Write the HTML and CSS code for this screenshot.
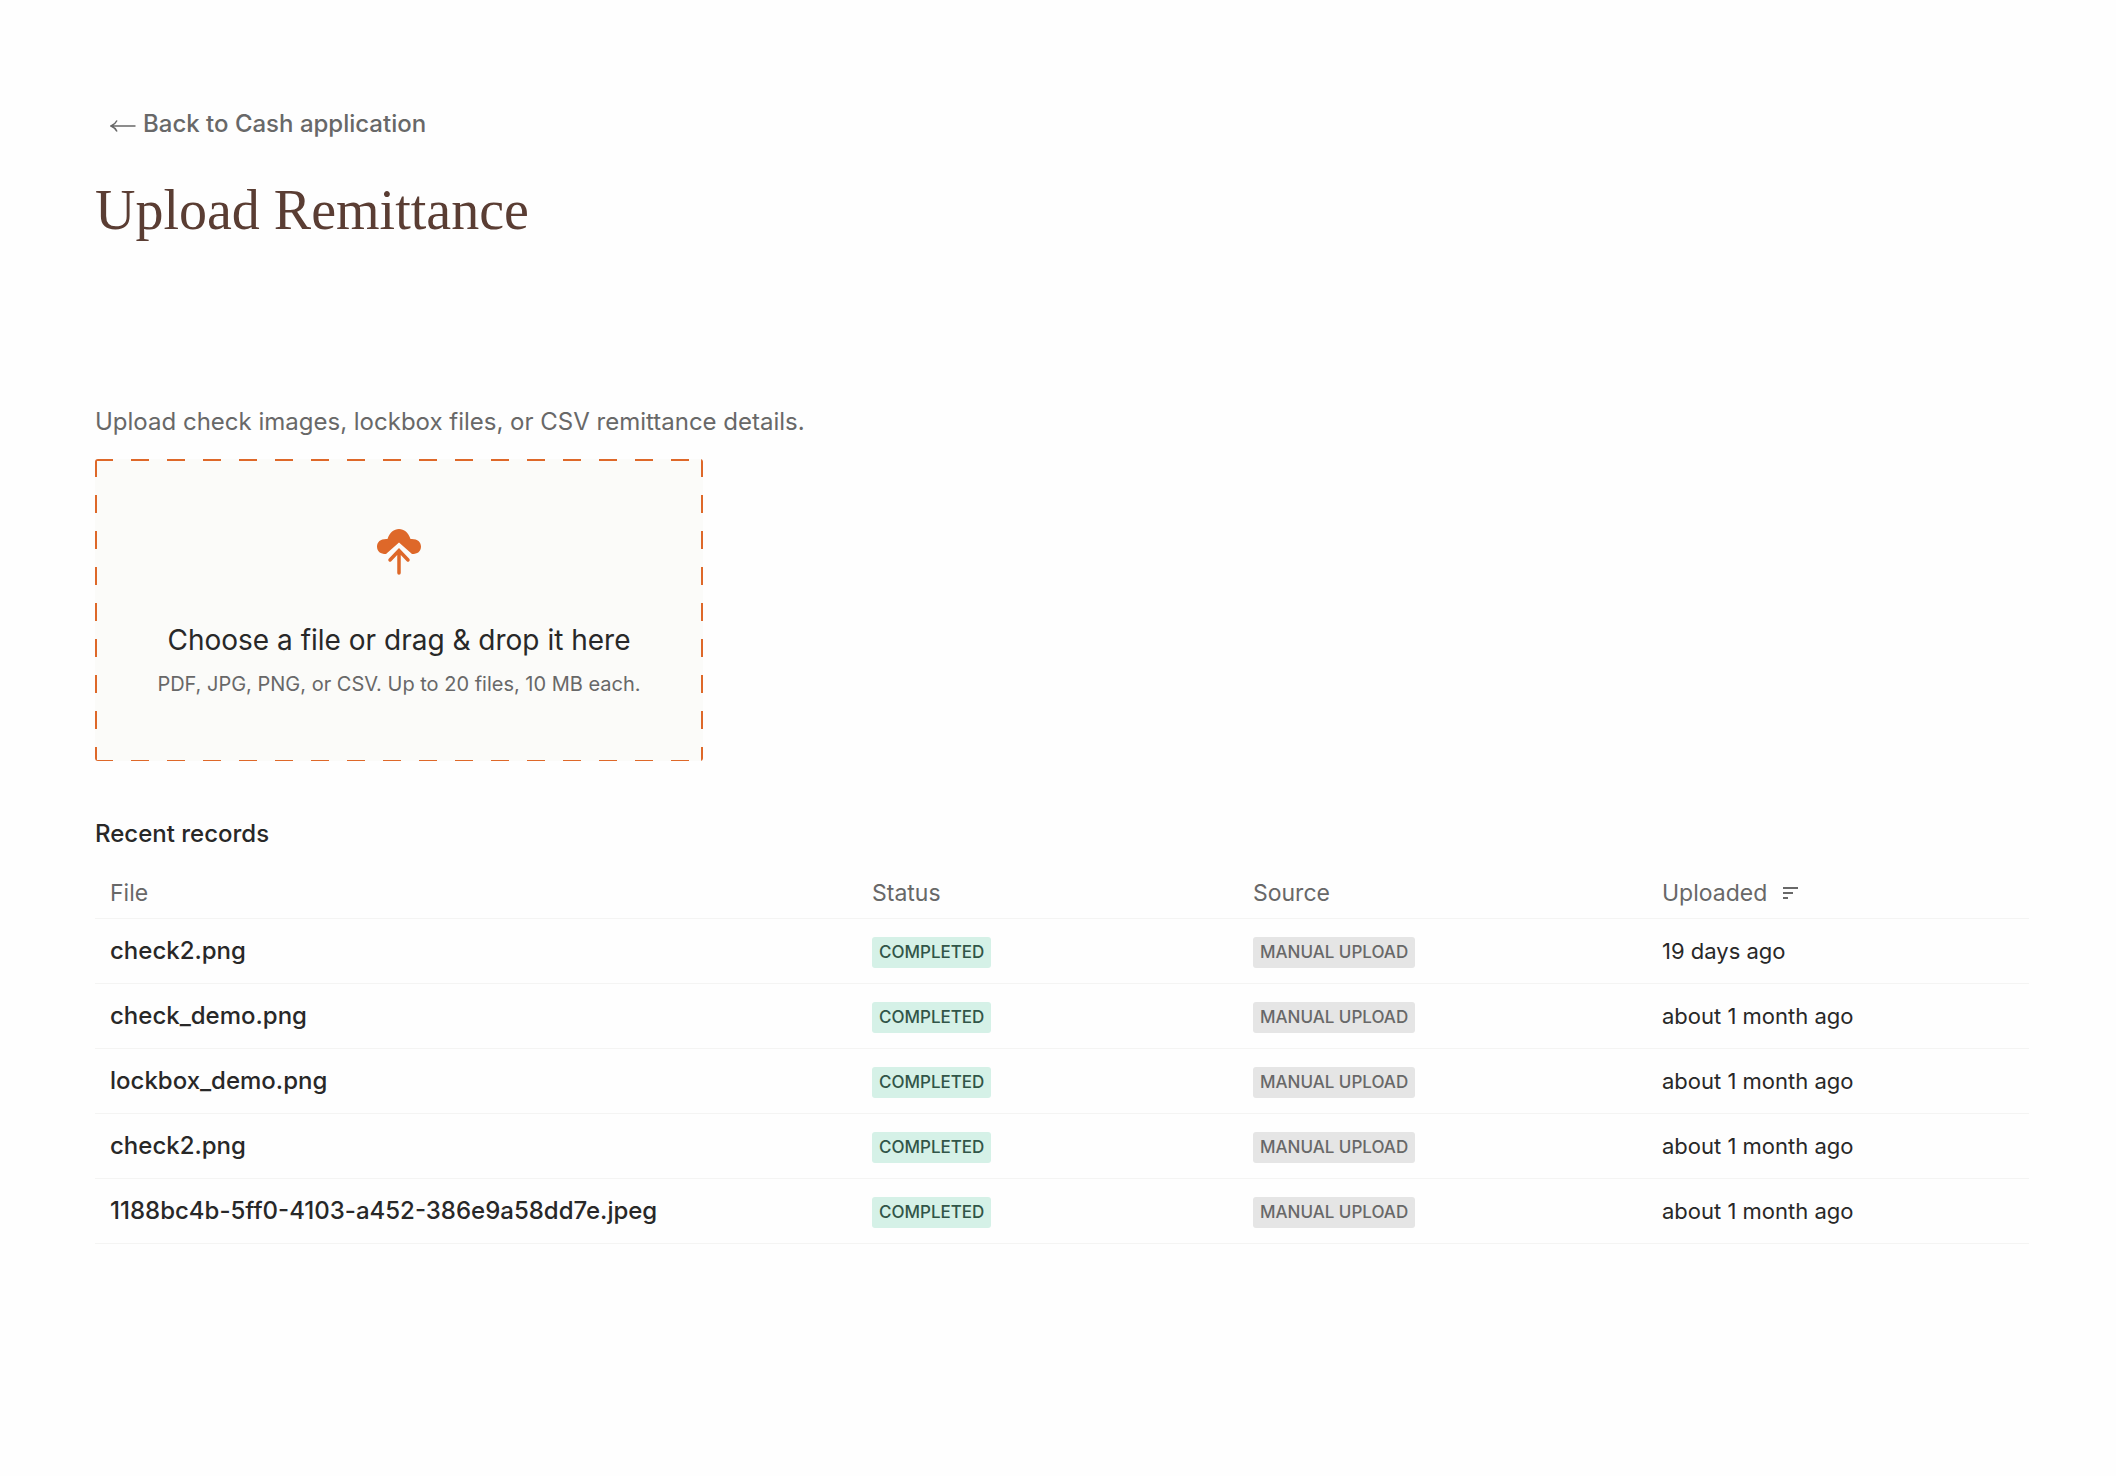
FILE: index.html
```
<!DOCTYPE html>
<html lang="en">
<head>
<meta charset="utf-8">
<meta name="viewport" content="width=device-width, initial-scale=1">
<title>Upload Remittance</title>
<link rel="stylesheet" href="styles.css">
</head>
<body>
<main class="page">
  <header class="page-header">
    <a class="back-link" href="#cash-application">
      <svg class="back-arrow" viewBox="0 0 26 14" aria-hidden="true"><path d="M25.500 7H1.500M7 1.500Q5 5.500 1 7Q5 8.500 7 12.500"/></svg>
      Back to Cash application
    </a>
    <h1 class="title">Upload Remittance</h1>
  </header>

  <section class="upload">
    <p class="intro">Upload check images, lockbox files, or CSV remittance details.</p>
    <button class="dropzone" type="button">
      <svg class="cloud" viewBox="0 0 44 46" aria-hidden="true">
        <path class="cloud-body" d="M10.500 10C12.500 3.500 17 0 22 0S31.500 3.500 33.500 10C40 9.500 44 12.500 44 17.500C44 22.500 40.500 25 35 25L22 13.500L9 25C3.500 25 0 22.500 0 17.500C0 12.500 4 9.500 10.500 10Z"/>
        <path class="cloud-arrow" d="M22 44V21.500M13 31L22 21.500L31 31"/>
      </svg>
      <span class="drop-title">Choose a file or drag &amp; drop it here</span>
      <span class="drop-hint">PDF, JPG, PNG, or CSV. Up to 20 files, 10 MB each.</span>
    </button>
  </section>

  <section class="records">
    <h2 class="records-title">Recent records</h2>
    <table class="table">
      <colgroup><col class="col-file"><col class="col-status"><col class="col-source"><col class="col-date"></colgroup>
      <thead>
        <tr>
          <th scope="col">File</th>
          <th scope="col">Status</th>
          <th scope="col">Source</th>
          <th scope="col" aria-sort="descending"><button class="sort" type="button">Uploaded<svg class="sort-icon" viewBox="0 0 16 12" aria-hidden="true"><path d="M0 1H15M0 6H10M0 11H5"/></svg></button></th>
        </tr>
      </thead>
      <tbody>
        <tr><td class="file">check2.png</td><td><span class="badge done">COMPLETED</span></td><td><span class="badge">MANUAL UPLOAD</span></td><td>19 days ago</td></tr>
        <tr><td class="file">check_demo.png</td><td><span class="badge done">COMPLETED</span></td><td><span class="badge">MANUAL UPLOAD</span></td><td>about 1 month ago</td></tr>
        <tr><td class="file">lockbox_demo.png</td><td><span class="badge done">COMPLETED</span></td><td><span class="badge">MANUAL UPLOAD</span></td><td>about 1 month ago</td></tr>
        <tr><td class="file">check2.png</td><td><span class="badge done">COMPLETED</span></td><td><span class="badge">MANUAL UPLOAD</span></td><td>about 1 month ago</td></tr>
        <tr><td class="file">1188bc4b-5ff0-4103-a452-386e9a58dd7e.jpeg</td><td><span class="badge done">COMPLETED</span></td><td><span class="badge">MANUAL UPLOAD</span></td><td>about 1 month ago</td></tr>
      </tbody>
    </table>
  </section>
</main>
</body>
</html>
```
FILE: styles.css
```
:root {
  --ink: #282828;
  --muted: #686868;
  --accent: #de6829;
  --line: #f4f4f3;
}

* { box-sizing: border-box; }

body {
  margin: 0;
  background: #fefefe;
  color: var(--ink);
  font-family: Inter, "Liberation Sans", sans-serif;
  font-size: 24px;
  line-height: 32px;
}

button {
  border: 0;
  padding: 0;
  background: none;
  color: inherit;
  font: inherit;
  cursor: pointer;
}

.page { padding: 108px 87px 64px 95px; }

.page-header {
  display: flex;
  flex-direction: column;
  align-items: flex-start;
  gap: 32px;
}

.back-link {
  display: flex;
  align-items: center;
  gap: 7px;
  padding-left: 15px;
  color: var(--muted);
  font-weight: 500;
  text-decoration: none;
}

.back-arrow {
  width: 26px;
  height: 14px;
  margin-top: 4px;
  fill: none;
  stroke: currentColor;
  stroke-width: 1.5;
}

.title {
  margin: 0;
  color: #5a3d33;
  font-family: "Liberation Serif", serif;
  font-size: 56px;
  font-weight: 400;
  line-height: 76px;
}

.upload { margin-top: 156px; }

.intro {
  margin: 0 0 19px;
  color: var(--muted);
  line-height: 36px;
}

.dropzone {
  --dash: var(--accent) 0 18px, transparent 18px 36px;
  display: flex;
  flex-direction: column;
  align-items: center;
  width: 608px;
  max-width: 100%;
  padding: 70px 24px 61px;
  border-radius: 3px;
  background:
    repeating-linear-gradient(90deg, var(--dash)) top / 100% 2px no-repeat,
    repeating-linear-gradient(90deg, var(--dash)) bottom / 100% 1px no-repeat,
    repeating-linear-gradient(180deg, var(--dash)) left / 2px 100% no-repeat,
    repeating-linear-gradient(180deg, var(--dash)) right / 2px 100% no-repeat,
    #fbfbf9;
}

.cloud {
  width: 44px;
  height: 46px;
  margin-bottom: 45px;
}

.cloud-body { fill: var(--accent); }

.cloud-arrow {
  fill: none;
  stroke: var(--accent);
  stroke-width: 3.5;
  stroke-linecap: round;
}

.drop-title {
  margin-bottom: 8px;
  font-size: 28px;
  line-height: 40px;
}

.drop-hint {
  color: var(--muted);
  font-size: 20px;
}

.records { margin-top: 55px; }

.records-title {
  margin: 0 0 17px;
  font-size: 24px;
  font-weight: 500;
  line-height: 36px;
}

.table {
  width: 100%;
  border-collapse: collapse;
  table-layout: fixed;
}

.col-file { width: 39.4%; }
.col-status { width: 19.7%; }
.col-source { width: 21.15%; }

th, td {
  padding: 0 15px;
  border-bottom: 1px solid var(--line);
  text-align: left;
  white-space: nowrap;
}

th {
  height: 49px;
  color: var(--muted);
  font-size: 23px;
  font-weight: 400;
}

td {
  height: 65px;
  font-size: 22px;
}

.file {
  font-size: 24px;
  font-weight: 500;
}

.sort {
  display: flex;
  align-items: center;
  gap: 16px;
}

.sort-icon {
  width: 16px;
  height: 12px;
  fill: none;
  stroke: currentColor;
  stroke-width: 2;
}

.badge {
  display: inline-block;
  padding: 0 7px;
  border-radius: 3px;
  background: #e5e5e5;
  color: var(--muted);
  font-size: 17px;
  font-weight: 500;
  line-height: 31px;
}

.done {
  background: #d5f1e7;
  color: #315548;
}
```
